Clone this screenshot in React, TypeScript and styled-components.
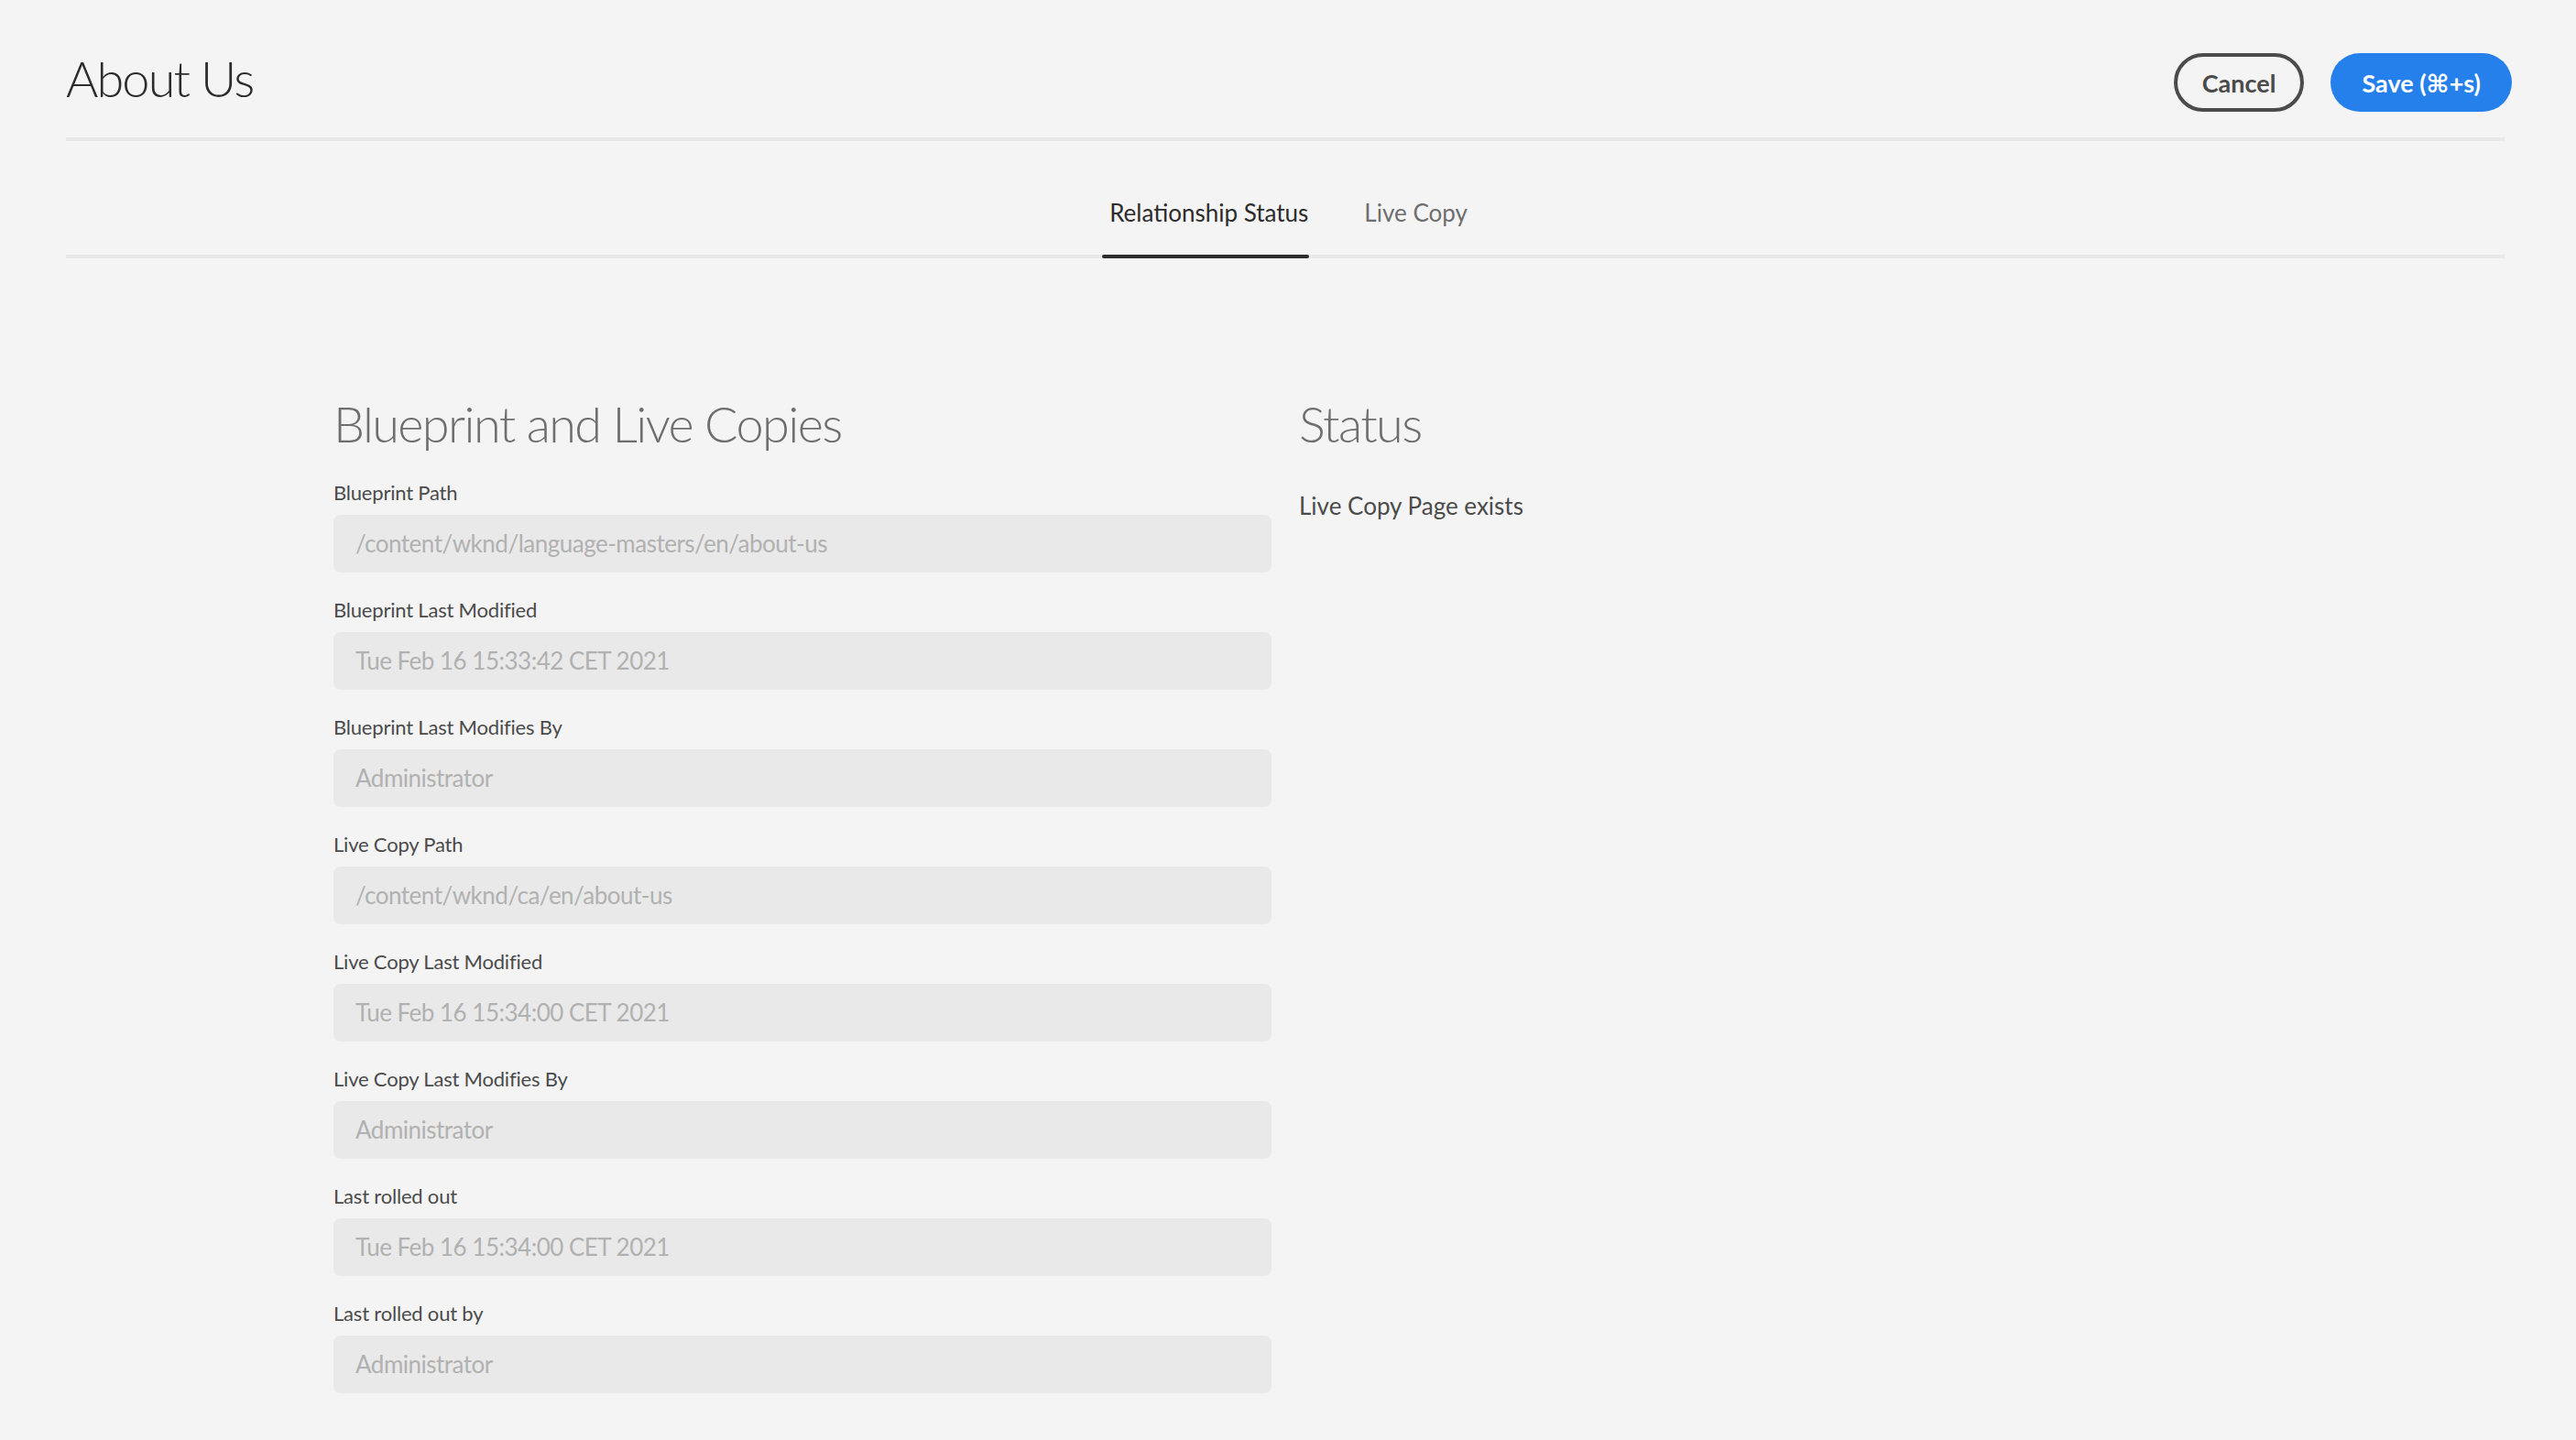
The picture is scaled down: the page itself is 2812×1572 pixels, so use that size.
import React from "react";
import styled, { createGlobalStyle } from "styled-components";

const GlobalStyle = createGlobalStyle`
  html, body {
    margin: 0;
    padding: 0;
    background: #f4f4f4;
  }
  body {
    font-family: Lato, "Open Sans", "DejaVu Sans", sans-serif;
    color: #2c2c2c;
  }
  * { box-sizing: border-box; }
`;

const Page = styled.div`
  min-height: 1572px;
  padding: 0 78px 0 72px;
  background: #f4f4f4;
`;

const Header = styled.header`
  display: flex;
  align-items: center;
  justify-content: space-between;
  height: 154px;
  padding-top: 30px;
  border-bottom: 4px solid #e8e8e8;
`;

const Title = styled.h1`
  margin: 0 0 8px 0;
  font-family: Lato, sans-serif;
  font-weight: 300;
  font-size: 54px;
  line-height: 1;
  color: #2c2c2c;
  letter-spacing: -1.8px;
`;

const Actions = styled.div`
  display: flex;
  align-items: center;
  gap: 29px;
  margin-right: -8px;
`;

const Button = styled.button<{ $primary?: boolean }>`
  height: 64px;
  border-radius: 32px;
  font-family: Lato, "DejaVu Sans", sans-serif;
  font-weight: 700;
  font-size: 27px;
  cursor: pointer;
  white-space: nowrap;
  padding: ${(p) => (p.$primary ? "0 34px" : "0 27px")};
  border: ${(p) => (p.$primary ? "none" : "4px solid #4b4b4b")};
  background: ${(p) => (p.$primary ? "#2680eb" : "transparent")};
  color: ${(p) => (p.$primary ? "#ffffff" : "#4b4b4b")};
`;

const TabBar = styled.nav`
  display: flex;
  justify-content: center;
  align-items: flex-end;
  gap: 52px;
  height: 128px;
  border-bottom: 4px solid #e8e8e8;
`;

const Tab = styled.div<{ $active?: boolean }>`
  position: relative;
  padding: 0 1px 28px 8px;
  font-size: 26px;
  line-height: 36px;
  color: ${(p) => (p.$active ? "#2c2c2c" : "#6e6e6e")};
  &::after {
    content: "";
    display: ${(p) => (p.$active ? "block" : "none")};
    position: absolute;
    left: 0;
    right: 0;
    bottom: -4px;
    height: 4px;
    border-radius: 2px;
    background: #2c2c2c;
  }
`;

const Main = styled.main`
  display: grid;
  grid-template-columns: 1024px 1fr;
  column-gap: 30px;
  padding: 149px 292px 40px;
`;

const Column = styled.section`
  display: flex;
  flex-direction: column;
`;

const SectionTitle = styled.h2<{ $gap: number }>`
  margin: 0 0 ${(p) => p.$gap}px 0;
  font-family: Lato, sans-serif;
  font-weight: 300;
  font-size: 54px;
  line-height: 1.2;
  color: #6e6e6e;
  letter-spacing: -1.6px;
`;

const Field = styled.div`
  display: flex;
  flex-direction: column;
  margin-bottom: 25px;
`;

const Label = styled.label`
  font-size: 22px;
  line-height: 32px;
  margin-bottom: 8px;
  color: #4b4b4b;
  letter-spacing: -0.2px;
`;

const ReadOnlyInput = styled.div`
  height: 63px;
  display: flex;
  align-items: center;
  padding: 0 24px;
  background: #e9e9e9;
  border-radius: 8px;
  font-size: 26px;
  color: #b1b1b1;
  letter-spacing: -0.5px;
`;

const StatusText = styled.p`
  margin: 0;
  font-size: 26px;
  line-height: 36px;
  color: #4b4b4b;
`;

const fields: { label: string; value: string }[] = [
  { label: "Blueprint Path", value: "/content/wknd/language-masters/en/about-us" },
  { label: "Blueprint Last Modified", value: "Tue Feb 16 15:33:42 CET 2021" },
  { label: "Blueprint Last Modifies By", value: "Administrator" },
  { label: "Live Copy Path", value: "/content/wknd/ca/en/about-us" },
  { label: "Live Copy Last Modified", value: "Tue Feb 16 15:34:00 CET 2021" },
  { label: "Live Copy Last Modifies By", value: "Administrator" },
  { label: "Last rolled out", value: "Tue Feb 16 15:34:00 CET 2021" },
  { label: "Last rolled out by", value: "Administrator" },
];

export default function App() {
  return (
    <>
      <GlobalStyle />
      <Page>
        <Header>
          <Title>About Us</Title>
          <Actions>
            <Button>Cancel</Button>
            <Button $primary>Save (⌘+s)</Button>
          </Actions>
        </Header>
        <TabBar>
          <Tab $active>Relationship Status</Tab>
          <Tab>Live Copy</Tab>
        </TabBar>
        <Main>
          <Column>
            <SectionTitle $gap={26}>Blueprint and Live Copies</SectionTitle>
            {fields.map((f) => (
              <Field key={f.label}>
                <Label>{f.label}</Label>
                <ReadOnlyInput>{f.value}</ReadOnlyInput>
              </Field>
            ))}
          </Column>
          <Column>
            <SectionTitle $gap={38}>Status</SectionTitle>
            <StatusText>Live Copy Page exists</StatusText>
          </Column>
        </Main>
      </Page>
    </>
  );
}
